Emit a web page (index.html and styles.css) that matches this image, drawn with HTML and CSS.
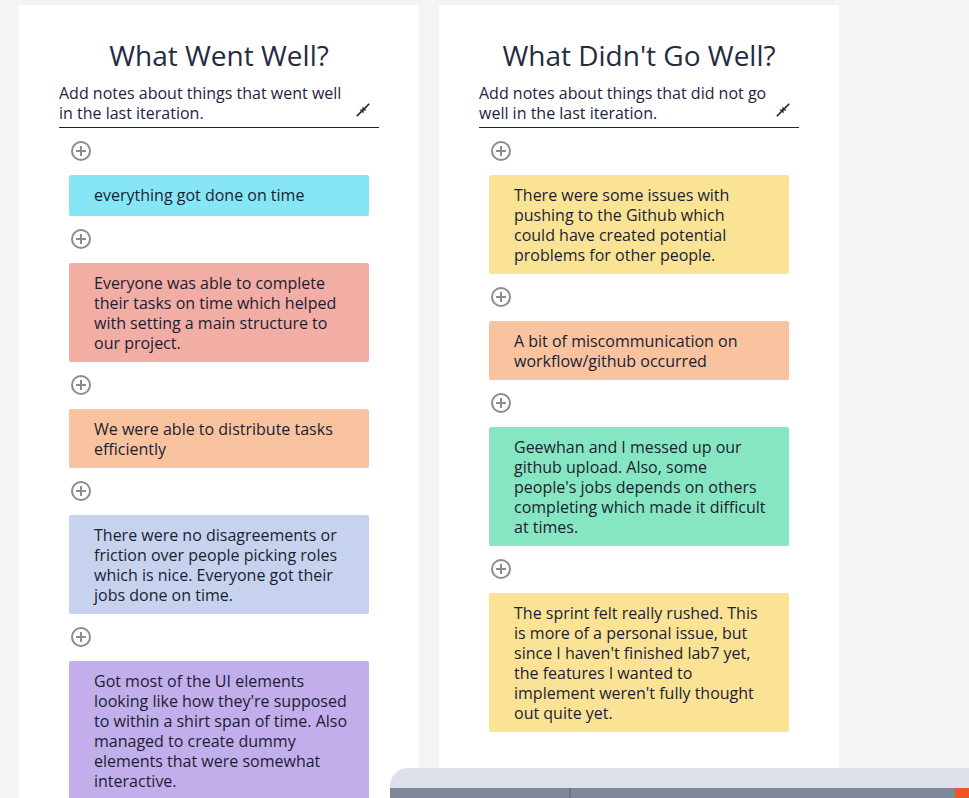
FILE: index.html
```html
<!DOCTYPE html>
<html>
<head>
<meta charset="utf-8">
<link rel="stylesheet" href="styles.css">
</head>
<body>
<div class="board">
  <section class="panel">
    <h2 class="title">What Went Well?</h2>
    <div class="desc">
      <p class="desc-text">Add notes about things that went well in the last iteration.</p>
      <svg class="collapse" viewBox="0 0 14 14" width="14" height="14"><path d="M13.2 0.8 L8.4 5.6 M0.8 13.2 L5.6 8.4" stroke="#1f2340" stroke-width="1.6" fill="none"/><path d="M6.4 7.6 L10.6 7.6 L6.4 3.4 Z M7.6 6.4 L3.4 6.4 L7.6 10.6 Z" fill="#1f2340"/></svg>
    </div>
    <div class="list">
      <div class="add"><span class="plus"></span></div>
      <div class="card c-cyan">everything got done on time</div>
      <div class="add"><span class="plus"></span></div>
      <div class="card c-salmon">Everyone was able to complete their tasks on time which helped with setting a main structure to our project.</div>
      <div class="add"><span class="plus"></span></div>
      <div class="card c-peach">We were able to distribute tasks efficiently</div>
      <div class="add"><span class="plus"></span></div>
      <div class="card c-blue">There were no disagreements or friction over people picking roles which is nice. Everyone got their jobs done on time.</div>
      <div class="add"><span class="plus"></span></div>
      <div class="card c-purple">Got most of the UI elements looking like how they're supposed to within a shirt span of time. Also managed to create dummy elements that were somewhat interactive.</div>
    </div>
  </section>
  <section class="panel">
    <h2 class="title">What Didn't Go Well?</h2>
    <div class="desc">
      <p class="desc-text">Add notes about things that did not go well in the last iteration.</p>
      <svg class="collapse" viewBox="0 0 14 14" width="14" height="14"><path d="M13.2 0.8 L8.4 5.6 M0.8 13.2 L5.6 8.4" stroke="#1f2340" stroke-width="1.6" fill="none"/><path d="M6.4 7.6 L10.6 7.6 L6.4 3.4 Z M7.6 6.4 L3.4 6.4 L7.6 10.6 Z" fill="#1f2340"/></svg>
    </div>
    <div class="list">
      <div class="add"><span class="plus"></span></div>
      <div class="card c-yellow">There were some issues with pushing to the Github which could have created potential problems for other people.</div>
      <div class="add"><span class="plus"></span></div>
      <div class="card c-peach">A bit of miscommunication on workflow/github occurred</div>
      <div class="add"><span class="plus"></span></div>
      <div class="card c-green">Geewhan and I messed up our github upload. Also, some people's jobs depends on others completing which made it difficult at times.</div>
      <div class="add"><span class="plus"></span></div>
      <div class="card c-yellow">The sprint felt really rushed. This is more of a personal issue, but since I haven't finished lab7 yet, the features I wanted to implement weren't fully thought out quite yet.</div>
    </div>
  </section>
</div>
<div class="tray">
  <div class="tray-bar">
    <span class="tray-divider"></span>
    <span class="tray-accent"></span>
  </div>
</div>
</body>
</html>
```
FILE: styles.css
```css
html, body {
  margin: 0;
  padding: 0;
  background: #f4f4f6;
  font-family: "Open Sans", "Noto Sans", sans-serif;
  color: #1f2340;
  height: 100%;
  overflow: hidden;
}

.board {
  display: flex;
  align-items: flex-start;
  gap: 20px;
  padding: 5px 0 0 19px;
}

.panel {
  width: 400px;
  min-height: 900px;
  background: #ffffff;
  padding-top: 31px;
  box-sizing: border-box;
}

.title {
  margin: 0;
  text-align: center;
  font-size: 28px;
  font-weight: 400;
  line-height: 38px;
  color: #262b42;
}

.desc {
  margin: 9px 40px 0;
  display: flex;
  align-items: flex-end;
  justify-content: space-between;
  border-bottom: 1px solid #1f2340;
  padding-bottom: 4px;
}

.desc-text {
  margin: 0;
  width: 292px;
  font-size: 16px;
  line-height: 20px;
  color: #1f2340;
}

.collapse {
  margin: 0 9px 6px 0;
  flex: none;
}

.list {
  margin: 0 50px;
}

.add {
  height: 47px;
  display: flex;
  align-items: center;
}

.plus {
  position: relative;
  width: 16px;
  height: 16px;
  margin-left: 2px;
  margin-top: -1px;
  border: 2px solid #8c8c8c;
  border-radius: 50%;
}

.plus::before,
.plus::after {
  content: "";
  position: absolute;
  background: #8c8c8c;
  left: 50%;
  top: 50%;
  transform: translate(-50%, -50%);
}

.plus::before {
  width: 10px;
  height: 2px;
}

.plus::after {
  width: 2px;
  height: 10px;
}

.card {
  min-height: 22px;
  padding: 10px 20px 9px 25px;
  font-size: 16px;
  line-height: 20px;
  color: #1a1e33;
  border-radius: 2px;
}

.c-cyan { background: #86e6f6; }
.c-salmon { background: #f2ada4; }
.c-peach { background: #f8c39e; }
.c-blue { background: #c7d3ee; }
.c-purple { background: #c2aeea; }
.c-yellow { background: #fbe396; }
.c-green { background: #87e6c2; }

.tray {
  position: fixed;
  left: 390px;
  right: 0;
  bottom: 0;
  height: 30px;
  background: #dce0e8;
  border-top-left-radius: 18px;
  overflow: hidden;
}

.tray-bar {
  position: absolute;
  left: 0;
  right: 0;
  top: 20px;
  bottom: 0;
  background: #7f889b;
}

.tray-divider {
  position: absolute;
  left: 179px;
  top: 0;
  bottom: 0;
  width: 2px;
  background: #6a7285;
}

.tray-accent {
  position: absolute;
  right: 0;
  top: 0;
  bottom: 0;
  width: 14px;
  background: #ee5626;
}
```
